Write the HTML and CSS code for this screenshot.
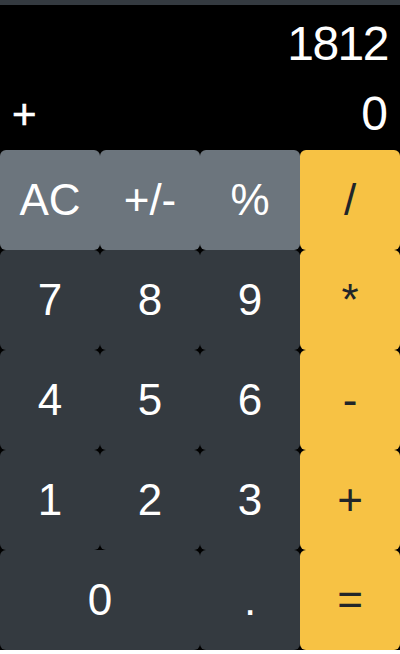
FILE: index.html
```html
<!DOCTYPE html>
<html>
<head>
<meta charset="utf-8">
<link rel="stylesheet" href="styles.css">
</head>
<body>
<div class="topbar"></div>
<div class="calc">
  <div class="display">
    <div class="prev">1812</div>
    <div class="current">
      <span class="op">+</span>
      <span class="value">0</span>
    </div>
  </div>
  <div class="keys">
    <button class="key gray">AC</button>
    <button class="key gray">+/-</button>
    <button class="key gray">%</button>
    <button class="key yellow">/</button>
    <button class="key dark">7</button>
    <button class="key dark">8</button>
    <button class="key dark">9</button>
    <button class="key yellow">*</button>
    <button class="key dark">4</button>
    <button class="key dark">5</button>
    <button class="key dark">6</button>
    <button class="key yellow">-</button>
    <button class="key dark">1</button>
    <button class="key dark">2</button>
    <button class="key dark">3</button>
    <button class="key yellow">+</button>
    <button class="key dark wide">0</button>
    <button class="key dark">.</button>
    <button class="key yellow">=</button>
  </div>
</div>
</body>
</html>
```

FILE: styles.css
```css
html, body {
  margin: 0;
  padding: 0;
  background: #fff;
  font-family: "Liberation Sans", Arial, sans-serif;
}
.topbar {
  height: 5px;
  background: #343a40;
}
.calc {
  width: 400px;
  background: #000;
}
.display {
  height: 145px;
  display: flex;
  flex-direction: column;
  color: #fff;
  padding: 0 12px 0 12px;
  box-sizing: border-box;
}
.prev {
  text-align: right;
  font-size: 48px;
  letter-spacing: -1.5px;
  line-height: 1;
  margin-top: 15px;
  height: 55px;
}
.current {
  display: flex;
  justify-content: space-between;
  align-items: flex-end;
  font-size: 48px;
  line-height: 1;
  margin-top: 15px;
}
.op {
  font-size: 42px;
  margin-bottom: 2px;
  -webkit-text-stroke: 0.6px #fff;
}
.keys {
  display: grid;
  grid-template-columns: repeat(4, 100px);
  grid-auto-rows: 100px;
}
.key {
  border: none;
  border-radius: 6px;
  font-family: "Liberation Sans", Arial, sans-serif;
  font-size: 44px;
  color: #fff;
  padding: 0;
  margin: 0;
}
.gray { background: #6c757d; }
.dark { background: #343a40; }
.yellow { background: #f7c244; color: #212529; }
.wide { grid-column: span 2; }
```
